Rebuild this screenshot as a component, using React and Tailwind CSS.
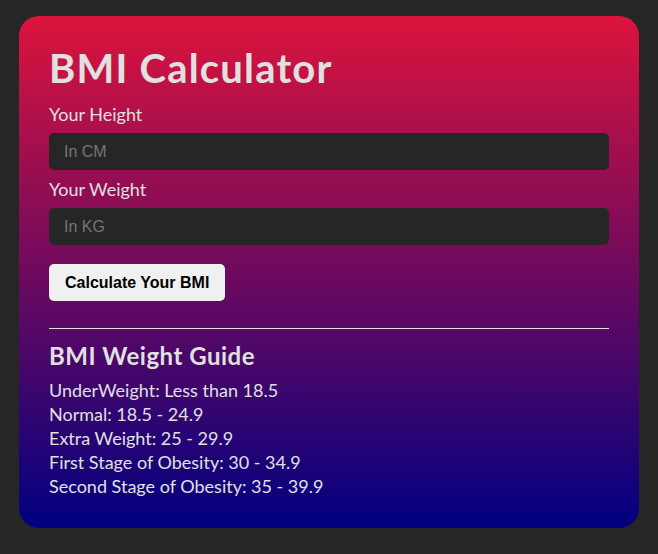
const guide = [
  'UnderWeight: Less than 18.5',
  'Normal: 18.5 - 24.9',
  'Extra Weight: 25 - 29.9',
  'First Stage of Obesity: 30 - 34.9',
  'Second Stage of Obesity: 35 - 39.9',
];

const Field = ({ label, placeholder }) => (
  <div>
    <label className="mb-[7px] block text-[18px] leading-[24px]">{label}</label>
    <input
      type="text"
      placeholder={placeholder}
      className="mb-[7px] block h-[37px] w-full rounded-[5px] bg-[#262626] px-[15px] font-['Liberation_Sans',Arial,sans-serif] text-[16px] text-[#e0e0e0] outline-none placeholder:text-[#757575]"
    />
  </div>
);

export default function App() {
  return (
    <div className="min-h-screen bg-[#262626] px-[19px] pt-[16px] pb-[27px]">
      <div className="rounded-[20px] bg-[linear-gradient(#dc143c,#000080)] px-[30px] pt-[28px] pb-[30px] font-['Lato',sans-serif] text-[#e0e0e0]">
        <h1 className="mb-[10px] text-[40px] font-bold leading-[48px] tracking-[1.2px]">BMI Calculator</h1>

        <Field label="Your Height" placeholder="In CM" />
        <Field label="Your Weight" placeholder="In KG" />

        <button className="mt-[12px] h-[37px] rounded-[5px] bg-[#f0f0f0] px-[16px] font-['Liberation_Sans',Arial,sans-serif] text-[16px] font-bold text-black">
          Calculate Your BMI
        </button>

        <hr className="mt-[27px] border-0 border-t border-[#e0e0e0]" />

        <h2 className="mt-[12px] text-[24px] font-bold leading-[30px] tracking-[0.5px]">BMI Weight Guide</h2>
        <div className="mt-[7px] text-[18px] leading-[24px]">
          {guide.map((line) => (
            <p key={line}>{line}</p>
          ))}
        </div>
      </div>
    </div>
  );
}
